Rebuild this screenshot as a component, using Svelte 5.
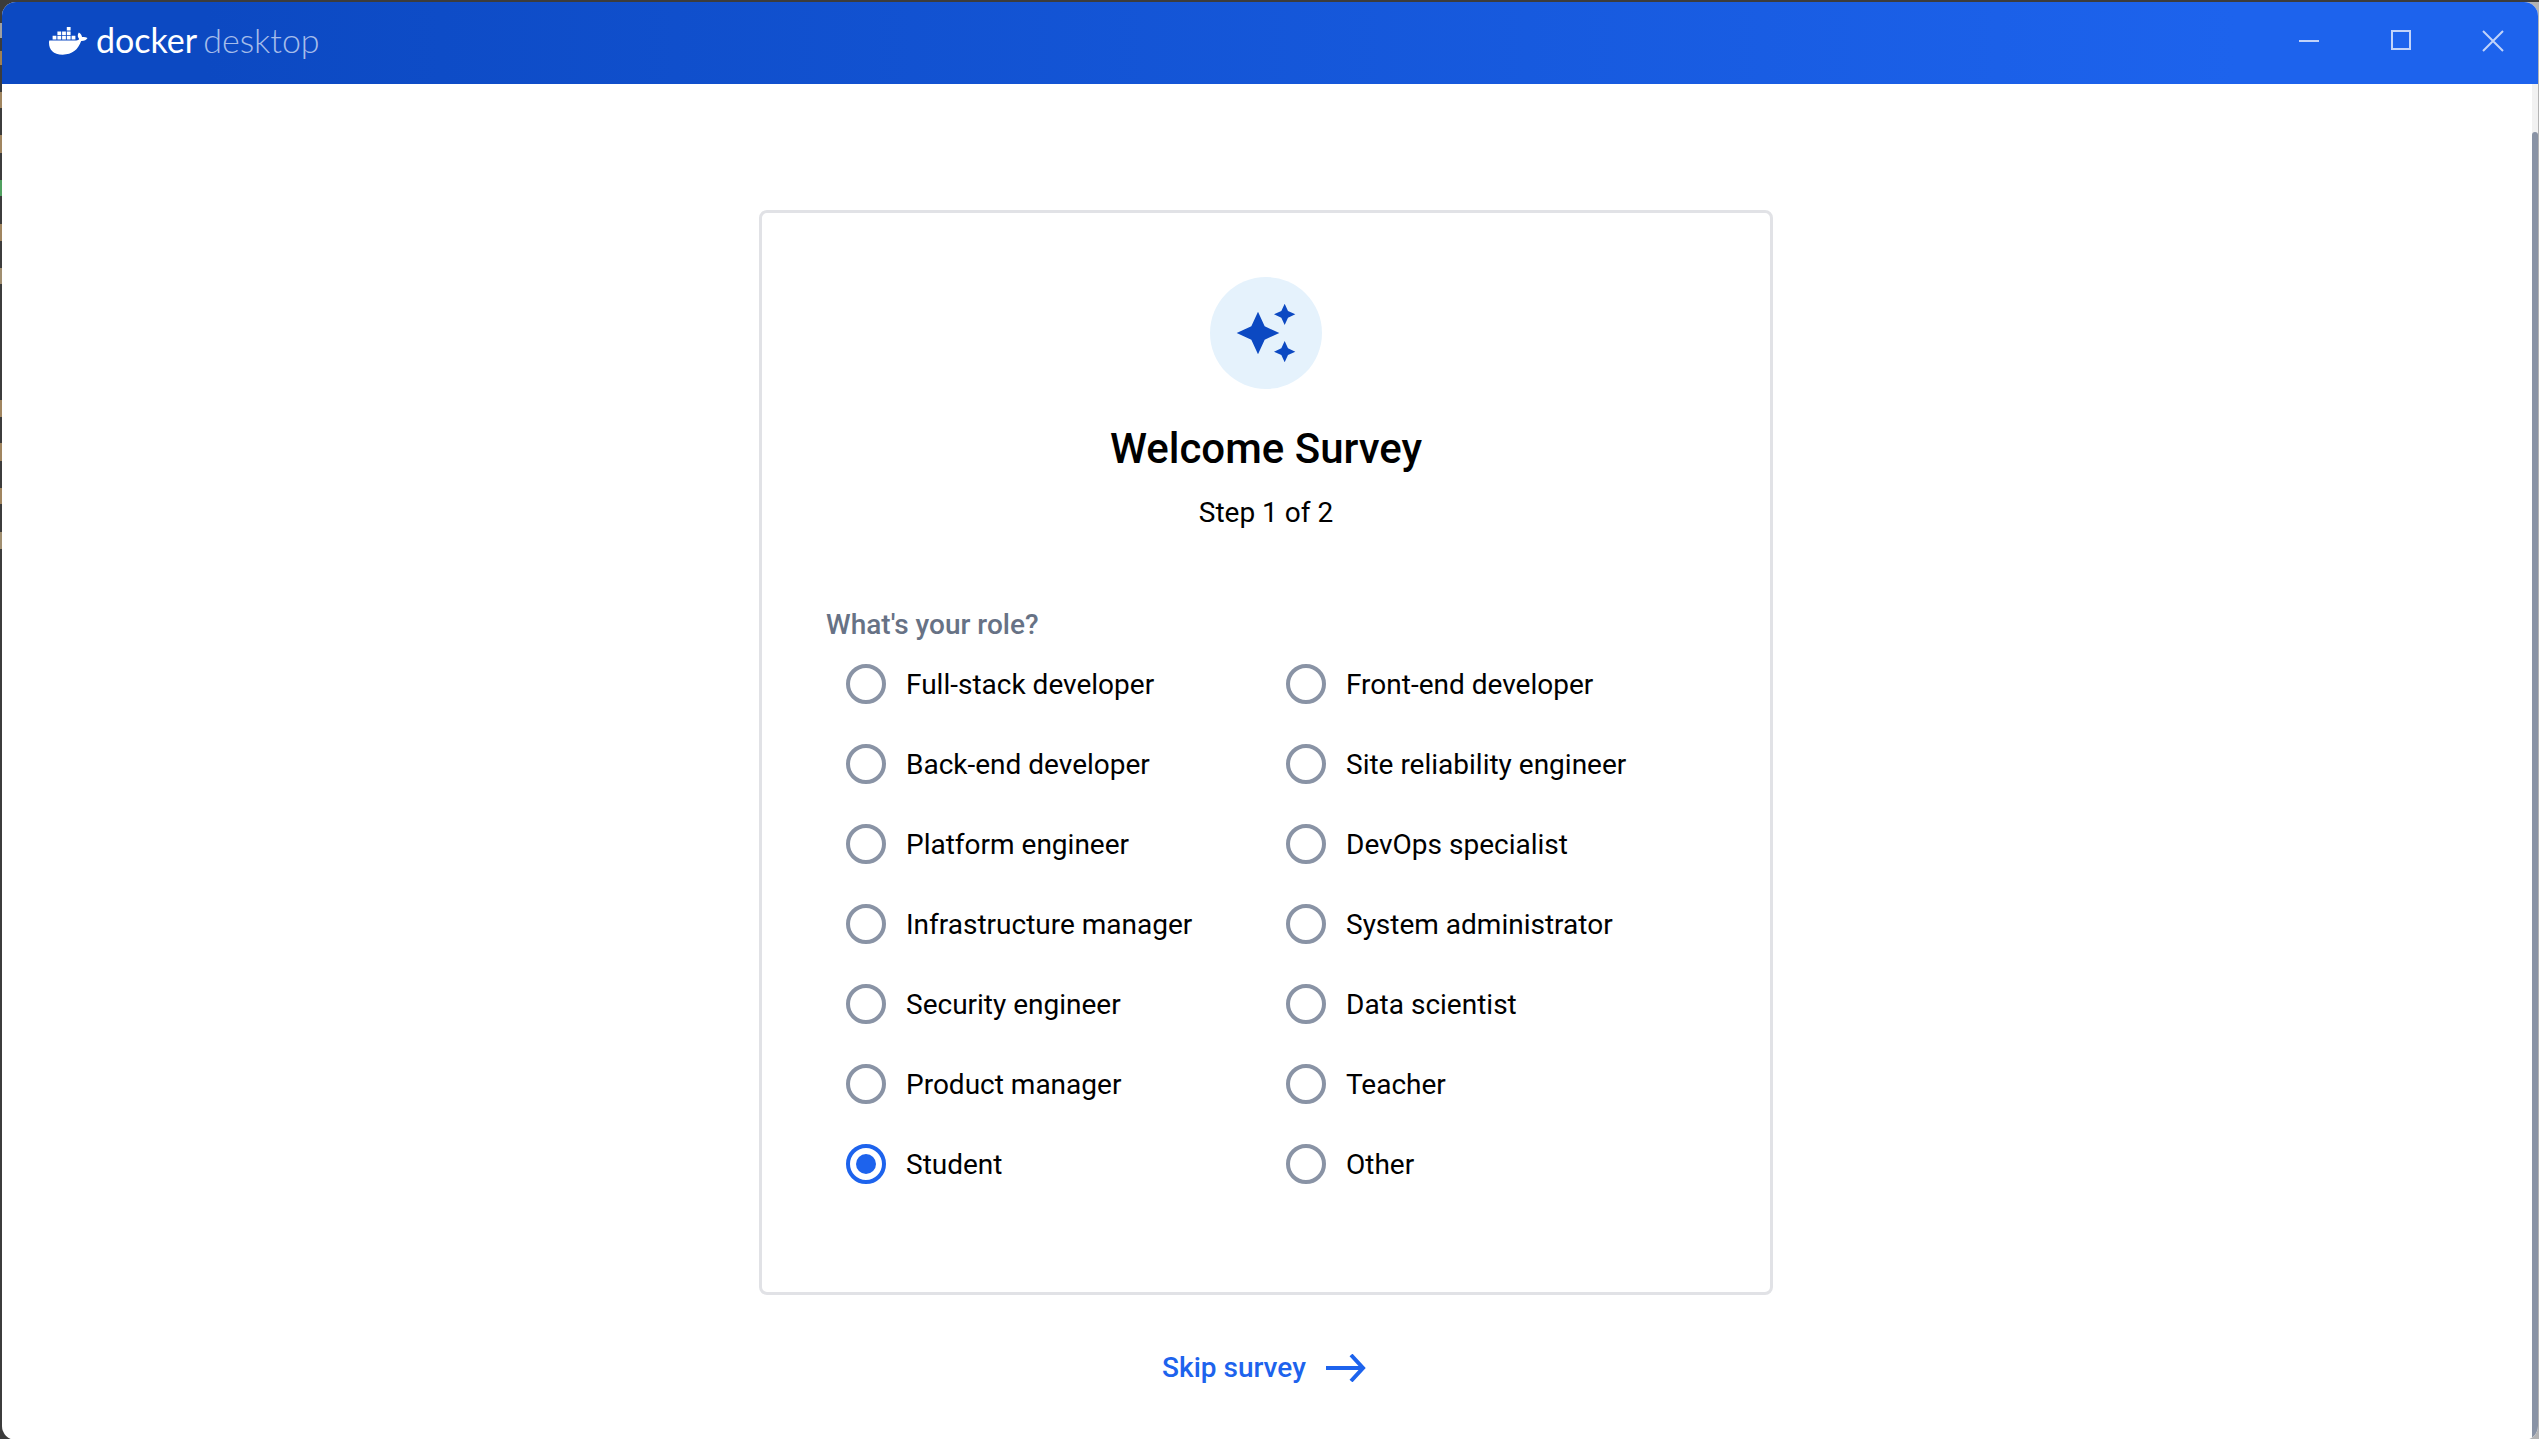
<script>
  const roles = [
    'Full-stack developer', 'Front-end developer',
    'Back-end developer', 'Site reliability engineer',
    'Platform engineer', 'DevOps specialist',
    'Infrastructure manager', 'System administrator',
    'Security engineer', 'Data scientist',
    'Product manager', 'Teacher',
    'Student', 'Other',
  ];
  let role = $state('Student');
</script>

<div class="desktop">
  <div class="window">
    <header>
      <div class="brand">
        <svg class="whale" viewBox="0 0 39 28" aria-hidden="true">
          <path fill="#fff" d="M0.3 13.4H27.2C28.8 13.2 29.9 12.5 30.2 11.9C28.6 10.2 28.2 7.9 29.8 5.4C32 6.7 33 8.4 33 10.1C35.2 9.8 37 10.1 38.5 11.1C37.4 13.3 35.2 14.2 32.2 14.1C29 22.8 23.2 27.7 13.7 27.7C4.2 27.7 0 22.8 0 15.8C0 14.8 0.1 14 0.3 13.4Z" />
          <g fill="#fff">
            <path d="M3.6 8.8h3.8v3.8H3.6zM8.4 8.8h3.8v3.8H8.4zM13.1 8.8h3.8v3.8h-3.8zM17.8 8.8h3.8v3.8h-3.8zM22.6 8.8h3.8v3.8h-3.8z" />
            <path d="M8.4 4.4h3.8v3.6H8.4zM13.1 4.4h3.8v3.6h-3.8zM17.8 4.4h3.8v3.6h-3.8zM17.8 0h3.8v3.6h-3.8z" />
          </g>
        </svg>
        <span class="name">docker</span>
        <span class="product">desktop</span>
      </div>
      <div class="controls">
        <button type="button" aria-label="Minimize">
          <svg viewBox="0 0 22 22"><path d="M1 11h20" /></svg>
        </button>
        <button type="button" aria-label="Maximize">
          <svg viewBox="0 0 22 22"><path d="M2 1h18v18H2z" /></svg>
        </button>
        <button type="button" aria-label="Close">
          <svg viewBox="0 0 22 22"><path d="M1 1l20 20M21 1L1 21" /></svg>
        </button>
      </div>
    </header>

    <div class="body">
      <main>
        <form class="card">
          <div class="badge">
            <svg viewBox="0 0 24 24" aria-hidden="true">
              <path d="M19 9l1.25-2.75L23 5l-2.75-1.25L19 1l-1.25 2.75L15 5l2.75 1.25L19 9zM11.5 9.500L9 4 6.500 9.500 1 12l5.500 2.500L9 20l2.500-5.500L17 12l-5.500-2.500zM19 15l-1.250 2.750L15 19l2.750 1.250L19 23l1.250-2.750L23 19l-2.750-1.250L19 15z" />
            </svg>
          </div>
          <h1>Welcome Survey</h1>
          <p>Step 1 of 2</p>
          <fieldset>
            <legend>What's your role?</legend>
            <div class="roles">
              {#each roles as name}
                <label>
                  <input type="radio" name="role" value={name} bind:group={role} />
                  <span>{name}</span>
                </label>
              {/each}
            </div>
          </fieldset>
        </form>
        <button type="button" class="skip">
          Skip survey
          <svg viewBox="0 0 48 28" aria-hidden="true"><path d="M4 14h37M29 1l12 13-12 13" /></svg>
        </button>
      </main>
      <div class="track"><div class="thumb"></div></div>
    </div>
  </div>
</div>

<style>
  :global(body) {
    margin: 0;
  }

  .desktop {
    box-sizing: border-box;
    display: flex;
    min-height: 100vh;
    padding: 2px 1px 1px 2px;
    /* top edge, then the editor lines showing past the left edge, then the desktop */
    background:
      linear-gradient(#3c3c3c, #3c3c3c) 0 0 / 100% 2px no-repeat,
      linear-gradient(
        #3c3c3c 23px, #a0a0a0 23px 38px, #3c3c3c 38px 51px, #a08050 51px 65px,
        #3c3c3c 65px 92px, #a08560 92px 108px, #3c3c3c 108px 135px, #a08560 135px 153px,
        #3c3c3c 153px 180px, #50a060 180px 196px, #3c3c3c 196px 224px, #a08560 224px 241px,
        #3c3c3c 241px 268px, #a08e70 268px 284px, #3c3c3c 284px 400px, #a08560 400px 417px,
        #3c3c3c 417px 443px, #a08560 443px 461px, #3c3c3c 461px 488px, #a08560 488px 504px,
        #3c3c3c 504px 532px, #a08e70 532px 549px, #3c3c3c 549px
      ) 0 0 / 2px 100% no-repeat,
      linear-gradient(90deg, #3c3c3c 66%, #b4b4b4 67%);
    font-family: Roboto, "Liberation Sans", sans-serif;
    font-size: 28px;
    line-height: 40px;
    color: #000;
  }

  .window {
    flex: 1;
    display: flex;
    flex-direction: column;
    overflow: hidden;
    border-radius: 14px;
    background: #fff;
  }

  header {
    box-sizing: border-box;
    display: flex;
    align-items: center;
    justify-content: space-between;
    height: 82px;
    padding: 0 21px 4px 47px;
    background: linear-gradient(90deg, #0c49c2 8%, #1d63ed 88%);
  }

  .brand {
    display: flex;
    align-items: center;
    font-family: Lato, sans-serif;
    font-size: 34px;
    line-height: 38px;
    color: #fff;
  }

  .name,
  .product {
    padding-bottom: 3px;
  }

  .whale {
    width: 39px;
    height: 28px;
    margin-right: 8px;
  }

  .product {
    margin-left: 6px;
    font-weight: 300;
    color: #a5bcea;
  }

  .controls {
    display: flex;
    gap: 44px;
  }

  .controls button {
    display: flex;
    padding: 13px;
    border: 0;
    background: none;
  }

  .controls svg {
    width: 22px;
    height: 22px;
    fill: none;
    stroke: #c1d3fa;
    stroke-width: 2;
  }

  .body {
    flex: 1;
    display: flex;
  }

  main {
    flex: 1;
    display: flex;
    flex-direction: column;
    align-items: center;
    padding: 126px 2px 0 0;
  }

  .card {
    box-sizing: border-box;
    display: flex;
    flex-direction: column;
    align-items: center;
    width: 1014px;
    padding: 64px 64px 88px;
    border: 3px solid #e1e2e6;
    border-radius: 8px;
  }

  .badge {
    display: flex;
    align-items: center;
    justify-content: center;
    width: 112px;
    height: 112px;
    border-radius: 50%;
    background: #e5f2fc;
  }

  .badge svg {
    width: 64px;
    height: 64px;
    fill: #0c49c2;
  }

  h1 {
    margin: 32px 0 0;
    font-size: 42px;
    font-weight: 500;
    line-height: 56px;
  }

  p {
    margin: 16px 0 0;
  }

  fieldset {
    align-self: stretch;
    margin: 73px 0 0;
    padding: 0;
    border: 0;
  }

  legend {
    padding: 0;
    font-weight: 500;
    line-height: 38px;
    color: #677285;
  }

  .roles {
    display: grid;
    grid-template-columns: 1fr 1fr;
  }

  label {
    display: flex;
    align-items: center;
    gap: 20px;
    height: 80px;
    padding-left: 20px;
    line-height: 41px;
  }

  input {
    appearance: none;
    box-sizing: border-box;
    width: 40px;
    height: 40px;
    margin: 0;
    border: 4px solid #8993a5;
    border-radius: 50%;
  }

  input:checked {
    padding: 6px;
    border-color: #1d63ed;
  }

  input:checked::before {
    content: "";
    display: block;
    width: 20px;
    height: 20px;
    border-radius: 50%;
    background: #1d63ed;
  }

  .skip {
    display: flex;
    align-items: center;
    gap: 16px;
    margin: 40px 0;
    padding: 12px 0;
    border: 0;
    background: none;
    font: inherit;
    font-weight: 500;
    line-height: 41px;
    color: #1d63ed;
  }

  .skip svg {
    width: 48px;
    height: 28px;
    fill: none;
    stroke: currentColor;
    stroke-width: 4;
  }

  .track {
    width: 6px;
    padding-top: 48px;
    display: flex;
    background: #f1f1f1;
  }

  .thumb {
    flex: 1;
    border-radius: 3px 3px 0 0;
    background: #8993a5;
  }
</style>
